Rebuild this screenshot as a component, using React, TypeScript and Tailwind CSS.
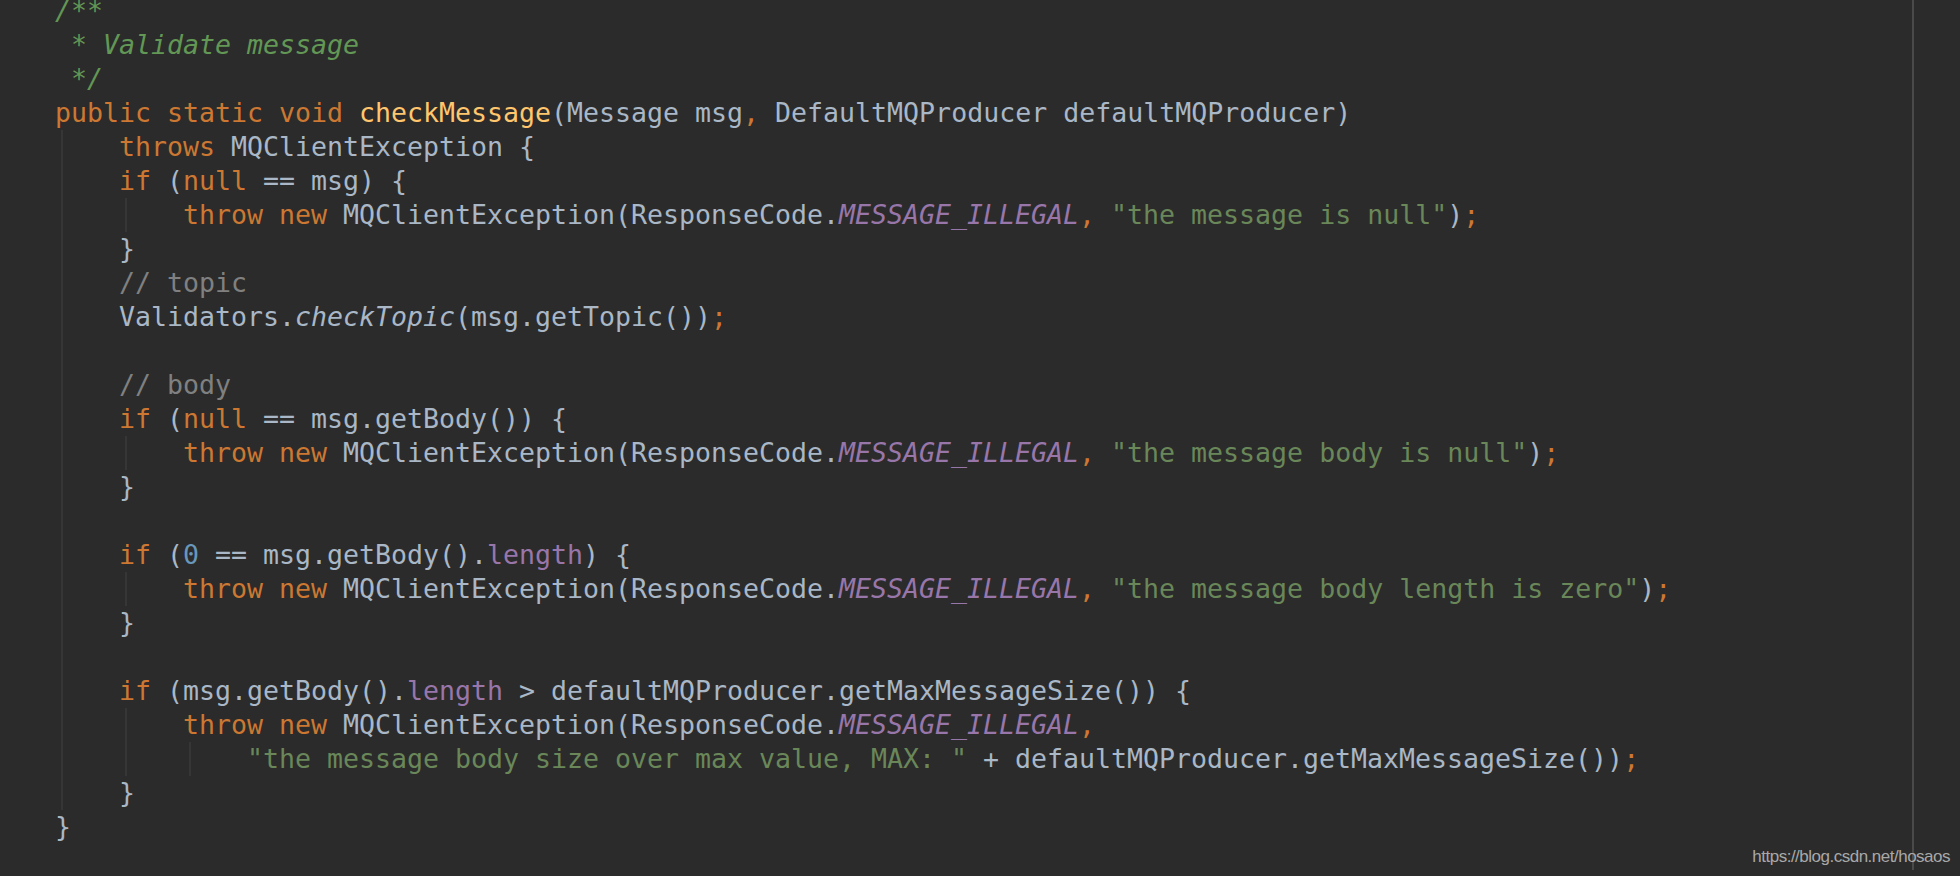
import React from "react";

type Kind = "k" | "d" | "f" | "s" | "c" | "doc" | "sf" | "fld" | "n" | "it";
type Tok = [Kind, string];
type Line = { guides: boolean[]; toks: Tok[] };

const colors: Record<Kind, string> = {
  k: "text-[#cc7832]",
  d: "text-[#a9b7c6]",
  f: "text-[#ffc66d]",
  s: "text-[#6a8759]",
  c: "text-[#808080]",
  doc: "text-[#629755] italic",
  sf: "text-[#9876aa] italic",
  fld: "text-[#9876aa]",
  n: "text-[#6897bb]",
  it: "text-[#a9b7c6] italic",
};

const throwLine = (msg: string): Tok[] => [
  ["k", "throw new "],
  ["d", "MQClientException(ResponseCode."],
  ["sf", "MESSAGE_ILLEGAL"],
  ["k", ", "],
  ["s", `"${msg}"`],
  ["d", ")"],
  ["k", ";"],
];

const lines: Line[] = [
  { guides: [], toks: [["doc", "/**"]] },
  { guides: [], toks: [["doc", " * Validate message"]] },
  { guides: [], toks: [["doc", " */"]] },
  {
    guides: [],
    toks: [
      ["k", "public static void "],
      ["f", "checkMessage"],
      ["d", "(Message msg"],
      ["k", ","],
      ["d", " DefaultMQProducer defaultMQProducer)"],
    ],
  },
  { guides: [true], toks: [["k", "throws "], ["d", "MQClientException {"]] },
  { guides: [true], toks: [["k", "if "], ["d", "("], ["k", "null"], ["d", " == msg) {"]] },
  { guides: [true, true], toks: throwLine("the message is null") },
  { guides: [true], toks: [["d", "}"]] },
  { guides: [true], toks: [["c", "// topic"]] },
  {
    guides: [true],
    toks: [["d", "Validators."], ["it", "checkTopic"], ["d", "(msg.getTopic())"], ["k", ";"]],
  },
  { guides: [true], toks: [] },
  { guides: [true], toks: [["c", "// body"]] },
  { guides: [true], toks: [["k", "if "], ["d", "("], ["k", "null"], ["d", " == msg.getBody()) {"]] },
  { guides: [true, true], toks: throwLine("the message body is null") },
  { guides: [true], toks: [["d", "}"]] },
  { guides: [true], toks: [] },
  {
    guides: [true],
    toks: [["k", "if "], ["d", "("], ["n", "0"], ["d", " == msg.getBody()."], ["fld", "length"], ["d", ") {"]],
  },
  { guides: [true, true], toks: throwLine("the message body length is zero") },
  { guides: [true], toks: [["d", "}"]] },
  { guides: [true], toks: [] },
  {
    guides: [true],
    toks: [
      ["k", "if "],
      ["d", "(msg.getBody()."],
      ["fld", "length"],
      ["d", " > defaultMQProducer.getMaxMessageSize()) {"],
    ],
  },
  {
    guides: [true, true],
    toks: [["k", "throw new "], ["d", "MQClientException(ResponseCode."], ["sf", "MESSAGE_ILLEGAL"], ["k", ","]],
  },
  {
    guides: [true, true, true],
    toks: [
      ["s", '"the message body size over max value, MAX: "'],
      ["d", " + defaultMQProducer.getMaxMessageSize())"],
      ["k", ";"],
    ],
  },
  { guides: [true], toks: [["d", "}"]] },
  { guides: [], toks: [["d", "}"]] },
];

function CodeLine({ line }: { line: Line }) {
  return (
    <div className="flex h-[34px] whitespace-pre">
      {line.guides.map((g, i) => (
        <span key={i} className="w-[4ch] h-[34px] shrink-0">
          {g && <span className="block ml-[6px] h-full w-[2px] bg-[#363636]" />}
        </span>
      ))}
      <span>
        {line.toks.map(([kind, text], i) => (
          <span key={i} className={colors[kind]}>
            {text}
          </span>
        ))}
      </span>
    </div>
  );
}

export default function App() {
  return (
    <div className="relative h-[876px] w-[1960px] overflow-hidden bg-[#2b2b2b]">
      <div className="h-full w-[1914px] border-r-2 border-[#4a4a4a]">
        <div className="-mt-[6px] pl-[55px] font-['DejaVu_Sans_Mono',monospace] text-[26.58px] leading-[34px]">
          {lines.map((line, i) => (
            <CodeLine key={i} line={line} />
          ))}
        </div>
      </div>
      <div className="absolute right-[10px] top-[848px] font-['Liberation_Sans',Arial,sans-serif] text-[17px] leading-[17px] tracking-[-0.5px] text-[#a8a8a8]">
        https://blog.csdn.net/hosaos
      </div>
    </div>
  );
}
